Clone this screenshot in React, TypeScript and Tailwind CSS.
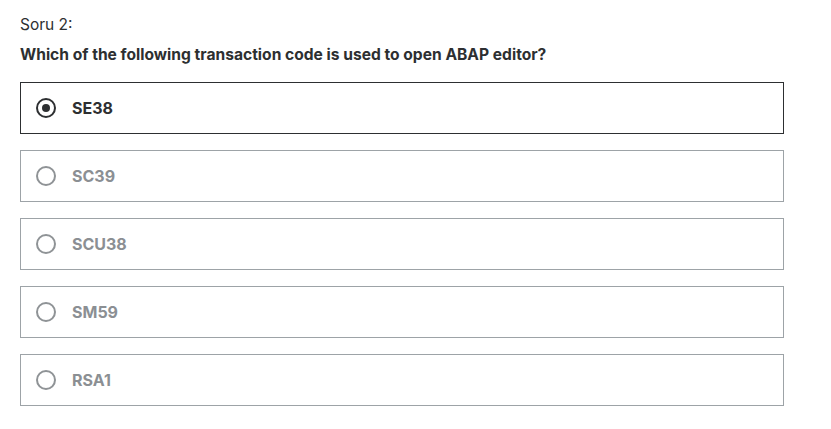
const options = ['SE38', 'SC39', 'SCU38', 'SM59', 'RSA1'];

function Radio({ checked }: { checked: boolean }) {
  return (
    <span
      className={
        'flex h-[20px] w-[20px] shrink-0 items-center justify-center rounded-full border-2 ' +
        (checked ? 'border-[#2d2f31]' : 'border-[#8f9396]')
      }
    >
      {checked && <span className="h-[8px] w-[8px] rounded-full bg-[#2d2f31]" />}
    </span>
  );
}

export default function App() {
  const selected = 0;
  return (
    <div className="min-h-[429px] w-[831px] bg-white px-5 pt-[15px] font-['Inter',sans-serif] text-[#2d2f31]">
      <p className="text-[15.5px] leading-[20px]">Soru 2:</p>
      <p className="mt-[10px] text-[15.6px] font-bold leading-[20px]">
        Which of the following transaction code is used to open ABAP editor?
      </p>
      <div className="mt-[17px] flex w-[764px] flex-col gap-[16px]">
        {options.map((o, i) => {
          const on = i === selected;
          return (
            <label
              key={o}
              className={
                'flex h-[52px] items-center gap-[16px] border px-[15px] ' +
                (on ? 'border-[#2d2f31]' : 'border-[#9da3a7]')
              }
            >
              <Radio checked={on} />
              <span
                className={
                  'text-[16px] font-bold ' + (on ? 'text-[#2d2f31]' : 'text-[#8b8f93]')
                }
              >
                {o}
              </span>
            </label>
          );
        })}
      </div>
    </div>
  );
}
